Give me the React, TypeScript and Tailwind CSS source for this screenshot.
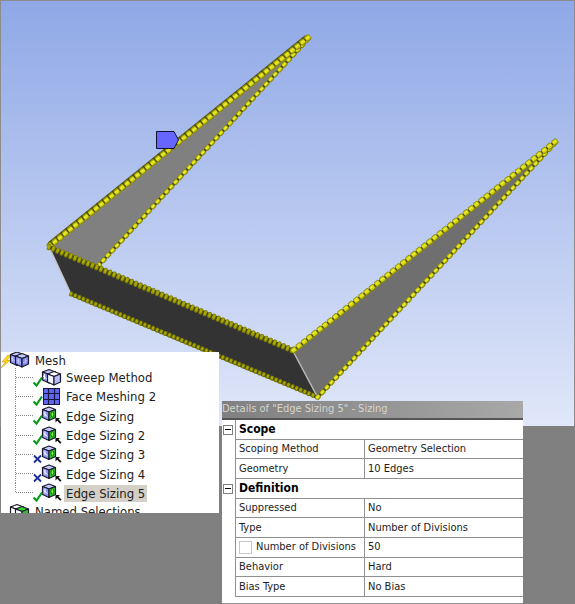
type Point = [number, number];

type BeadsProps = {
  from: Point;
  to: Point;
  count: number;
  length: number;
  width: number;
  dark?: boolean;
};

const Beads = ({ from, to, count, length, width, dark }: BeadsProps) => {
  const dx = to[0] - from[0];
  const dy = to[1] - from[1];
  const angle = (Math.atan2(dy, dx) * 180) / Math.PI;
  return (
    <g>
      <line
        x1={from[0]}
        y1={from[1]}
        x2={to[0]}
        y2={to[1]}
        stroke={dark ? "#4b4b06" : "#44441c"}
        strokeWidth={dark ? 4 : 3}
      />
      {Array.from({ length: count + 1 }, (_, i) => (
        <g
          key={i}
          transform={`translate(${from[0] + (dx * i) / count} ${
            from[1] + (dy * i) / count
          }) rotate(${angle})`}
        >
          <rect
            x={-length / 2}
            y={-width / 2}
            width={length}
            height={width}
            rx="1.2"
            fill={dark ? "#7c7c05" : "#8c8c08"}
          />
          <rect
            x={-length / 2 + 0.4}
            y={-width / 2 + 0.8}
            width={length - 1}
            height={width - 2}
            rx="1"
            fill={dark ? "#a9a906" : "#d8d80e"}
          />
          {!dark && (
            <rect
              x={-length / 2 + 1}
              y={-width / 2 + 1.8}
              width={length - 2.4}
              height="1.2"
              fill="#ecec40"
            />
          )}
        </g>
      ))}
    </g>
  );
};

const Scene = () => {
  return (
    <svg
      viewBox="0 0 575 426"
      className="block w-full h-auto"
      role="img"
      aria-label="Geometry"
    >
      <defs>
        <linearGradient id="sky" x1="0" y1="0" x2="0" y2="1">
          <stop offset="0" stopColor="#8fa8e6" />
          <stop offset="1" stopColor="#e0e7f9" />
        </linearGradient>
      </defs>
      <rect width="575" height="426" fill="#8c8c8c" />
      <rect x="1" y="1" width="573" height="425" fill="url(#sky)" />
      <polygon points="49,246 308,38 98,266" fill="#808080" />
      <polygon points="293,351 555,142 317,397" fill="#6f6f6f" />
      <polygon points="49,246 293,351 317,397 71,294" fill="#333333" />
      <line x1="50" y1="249" x2="71" y2="294" stroke="#c4c4c4" strokeWidth="1.5" />
      <Beads from={[99, 265]} to={[307, 40]} count={46} length={5.4} width={5} />
      <Beads from={[49, 244]} to={[306, 37]} count={50} length={5} width={3} dark />
      <Beads from={[50, 246]} to={[308, 38]} count={50} length={5.8} width={5.8} />
      <Beads from={[71, 294]} to={[317, 397]} count={60} length={3.2} width={5} dark />
      <Beads from={[49, 247]} to={[292, 350]} count={56} length={3.4} width={6.4} dark />
      <line x1="294" y1="353" x2="317" y2="396" stroke="#b8b8b8" strokeWidth="1.5" />
      <Beads from={[318, 397]} to={[554, 144]} count={52} length={5.4} width={5} />
      <Beads from={[294, 350]} to={[555, 142]} count={50} length={5.8} width={6} />
      <polygon
        points="156.5,131.5 174,131.5 178.5,140 174,148.5 156.5,148.5"
        fill="#6666ff"
        stroke="#111133"
      />
    </svg>
  );
};

type CubeProps = { x: number; y: number; left?: string; right?: string; top?: string };

const Cube = ({
  x,
  y,
  left = "#8f96f8",
  right = "#7f86f0",
  top = "#c6c9ff",
}: CubeProps) => {
  return (
    <g
      transform={`translate(${x} ${y})`}
      stroke="#1a1a2c"
      strokeWidth="1.2"
      strokeLinejoin="round"
    >
      <polygon points="0,3 6.5,0.5 13,3 6.5,5.5" fill={top} />
      <polygon points="0,3 6.5,5.5 6.5,14 0,11" fill={left} />
      <polygon points="13,3 6.5,5.5 6.5,14 13,11" fill={right} />
    </g>
  );
};

const MeshIcon = () => {
  return (
    <svg width="30" height="16" viewBox="0 0 30 16" className="shrink-0 overflow-visible">
      <path
        d="M7 3 L1 10 L4.5 10 L0 16 L9 8.5 L5.5 8.5 L9.5 4 Z"
        fill="#ffd91a"
        stroke="#c99a10"
        strokeWidth="0.6"
      />
      <Cube x={9.5} y={-0.5} />
      <Cube x={14.5} y={1} />
      <path
        d="M11.5 4.5v5M10 6l4 3M17.5 6v5.5M15.5 8l4.5 3M24.5 6v5.5M22 11l4.5-3"
        stroke="#d4d7ff"
        strokeWidth="0.7"
        fill="none"
      />
    </svg>
  );
};

const NamedIcon = () => {
  return (
    <svg width="30" height="19" viewBox="0 0 30 19" className="shrink-0">
      <Cube x={9.5} y={1} left="#ffffff" right="#e8e8e8" top="#ffffff" />
      <Cube x={14.5} y={3} left="#ffffff" right="#2fc02f" top="#30d830" />
    </svg>
  );
};

type NodeIconProps = { kind: string; state: string; last: boolean };

const NodeIcon = ({ kind, state, last }: NodeIconProps) => {
  return (
    <svg
      width="50"
      height="20"
      viewBox="0 0 50 20"
      className="shrink-0 overflow-visible"
    >
      <path
        d={last ? "M1.5 0V10" : "M1.5 0V20"}
        stroke="#8a8a8a"
        strokeDasharray="1 1"
      />
      <path d="M2 9.5H19" stroke="#8a8a8a" strokeDasharray="1 1" />
      {kind === "sweep" && (
        <g>
          <Cube x={28.5} y={1} />
          <path d="M30.5 6v5M29 8l4 3" stroke="#ffffff" strokeWidth="0.9" />
          <Cube x={33.5} y={3} left="#f4f4ff" right="#b9bcfa" top="#ffffff" />
        </g>
      )}
      {kind === "face" && (
        <g>
          <rect x="29.5" y="1.5" width="16" height="16" fill="#6066f2" stroke="#151540" />
          <path
            d="M34.5 1v17M40.5 1v17M29 6.5h17M29 12.5h17"
            stroke="#151540"
            strokeWidth="1.2"
          />
        </g>
      )}
      {kind === "edge" && (
        <g>
          <Cube x={28.5} y={0.5} right="#2fc22b" />
          <path
            d="M31 5.5v5M29.5 7l4 3.5"
            stroke="#ffffff"
            strokeWidth="0.9"
          />
          <ellipse
            cx="38.4"
            cy="8.4"
            rx="1.5"
            ry="2.6"
            fill="#7df04c"
            stroke="#0a5c10"
            strokeWidth="0.9"
          />
          <path
            d="M41.5 12h4.5l-1.5 1.5 3 3-1.3 1.3-3-3-1.7 1.7z"
            fill="#111111"
          />
        </g>
      )}
      {state === "ok" ? (
        <path
          d="M19.5 14.5L22.5 17.5L28 9.5"
          fill="none"
          stroke="#0c9a1c"
          strokeWidth="2.2"
        />
      ) : (
        <path
          d="M20 10.5L27 17.5M27 10.5L20 17.5"
          stroke="#1c2c94"
          strokeWidth="1.8"
        />
      )}
    </svg>
  );
};

const nodes = [
  { label: "Sweep Method", kind: "sweep", state: "ok" },
  { label: "Face Meshing 2", kind: "face", state: "ok" },
  { label: "Edge Sizing", kind: "edge", state: "ok" },
  { label: "Edge Sizing 2", kind: "edge", state: "ok" },
  { label: "Edge Sizing 3", kind: "edge", state: "off" },
  { label: "Edge Sizing 4", kind: "edge", state: "off" },
  { label: "Edge Sizing 5", kind: "edge", state: "ok" },
];

const Tree = () => {
  return (
    <nav className="ml-px bg-white text-[13px] leading-[17px] overflow-hidden">
      <div className="h-4 flex items-center">
        <MeshIcon />
        <span className="ml-1">Mesh</span>
      </div>
      <ul className="h-[135px] grid grid-rows-7 pl-[13px]">
        {nodes.map((node, i) => (
          <li key={node.label} className="flex items-center min-h-0">
            <NodeIcon
              kind={node.kind}
              state={node.state}
              last={i === nodes.length - 1}
            />
            <span
              className={
                i === nodes.length - 1
                  ? "px-0.5 bg-[#d4d0c8] whitespace-nowrap"
                  : "px-0.5 whitespace-nowrap"
              }
            >
              {node.label}
            </span>
          </li>
        ))}
      </ul>
      <div className="h-[10px] flex items-start">
        <NamedIcon />
        <span className="ml-1 whitespace-nowrap">Named Selections</span>
      </div>
    </nav>
  );
};

type Group = {
  name: string;
  rows: { name: string; value: string; checkbox?: boolean }[];
};

const groups: Group[] = [
  {
    name: "Scope",
    rows: [
      { name: "Scoping Method", value: "Geometry Selection" },
      { name: "Geometry", value: "10 Edges" },
    ],
  },
  {
    name: "Definition",
    rows: [
      { name: "Suppressed", value: "No" },
      { name: "Type", value: "Number of Divisions" },
      { name: "Number of Divisions", value: "50", checkbox: true },
      { name: "Behavior", value: "Hard" },
      { name: "Bias Type", value: "No Bias" },
    ],
  },
];

const GroupRows = ({ name, rows }: Group) => {
  return (
    <tbody>
      <tr>
        <td className="p-0 align-middle">
          <button
            aria-label={`Collapse ${name}`}
            className="block ml-px size-[10px] border border-[#808080] bg-white px-px"
          >
            <span className="block h-px bg-black" />
          </button>
        </td>
        <th
          colSpan={2}
          className="border-b border-l border-[#909090] p-0 pl-[3px] text-left text-[12px] font-bold text-black"
        >
          {name}
        </th>
      </tr>
      {rows.map((row) => (
        <tr key={row.name}>
          <td className="p-0" />
          <td className="border-b border-l border-[#909090] p-0 pl-[3px] whitespace-nowrap">
            {row.checkbox ? (
              <label className="flex items-center gap-1">
                <input
                  type="checkbox"
                  className="appearance-none shrink-0 size-[13px] border border-[#c8c8c8] bg-white"
                />
                {row.name}
              </label>
            ) : (
              row.name
            )}
          </td>
          <td className="border-b border-l border-[#909090] p-0 pl-[3px] whitespace-nowrap">
            {row.value}
          </td>
        </tr>
      ))}
    </tbody>
  );
};

const Details = () => {
  return (
    <section className="mt-[49px] bg-white border-b border-[#909090] pb-[6px] text-[11px] leading-[16px]">
      <h2 className="h-[19px] border-b-2 border-[#555555] bg-linear-to-r from-[#808080] to-[#a8a8a8] text-[#d8d4cc] whitespace-nowrap overflow-hidden">
        Details of "Edge Sizing 5" - Sizing
      </h2>
      <table className="w-full h-[177px] table-fixed border-separate border-spacing-0">
        <colgroup>
          <col className="w-[13px]" />
          <col className="w-[129px]" />
          <col />
        </colgroup>
        {groups.map((group) => (
          <GroupRows key={group.name} name={group.name} rows={group.rows} />
        ))}
      </table>
    </section>
  );
};

const App = () => {
  return (
    <main className="min-h-screen bg-[#808080] text-[#1c1c1c] font-['DejaVu_Sans_Condensed','DejaVu_Sans',sans-serif]">
      <Scene />
      <div className="relative -mt-[74px] grid grid-cols-[219fr_3px_301fr_52fr] items-start">
        <Tree />
        <div />
        <Details />
      </div>
    </main>
  );
};

export default App;
